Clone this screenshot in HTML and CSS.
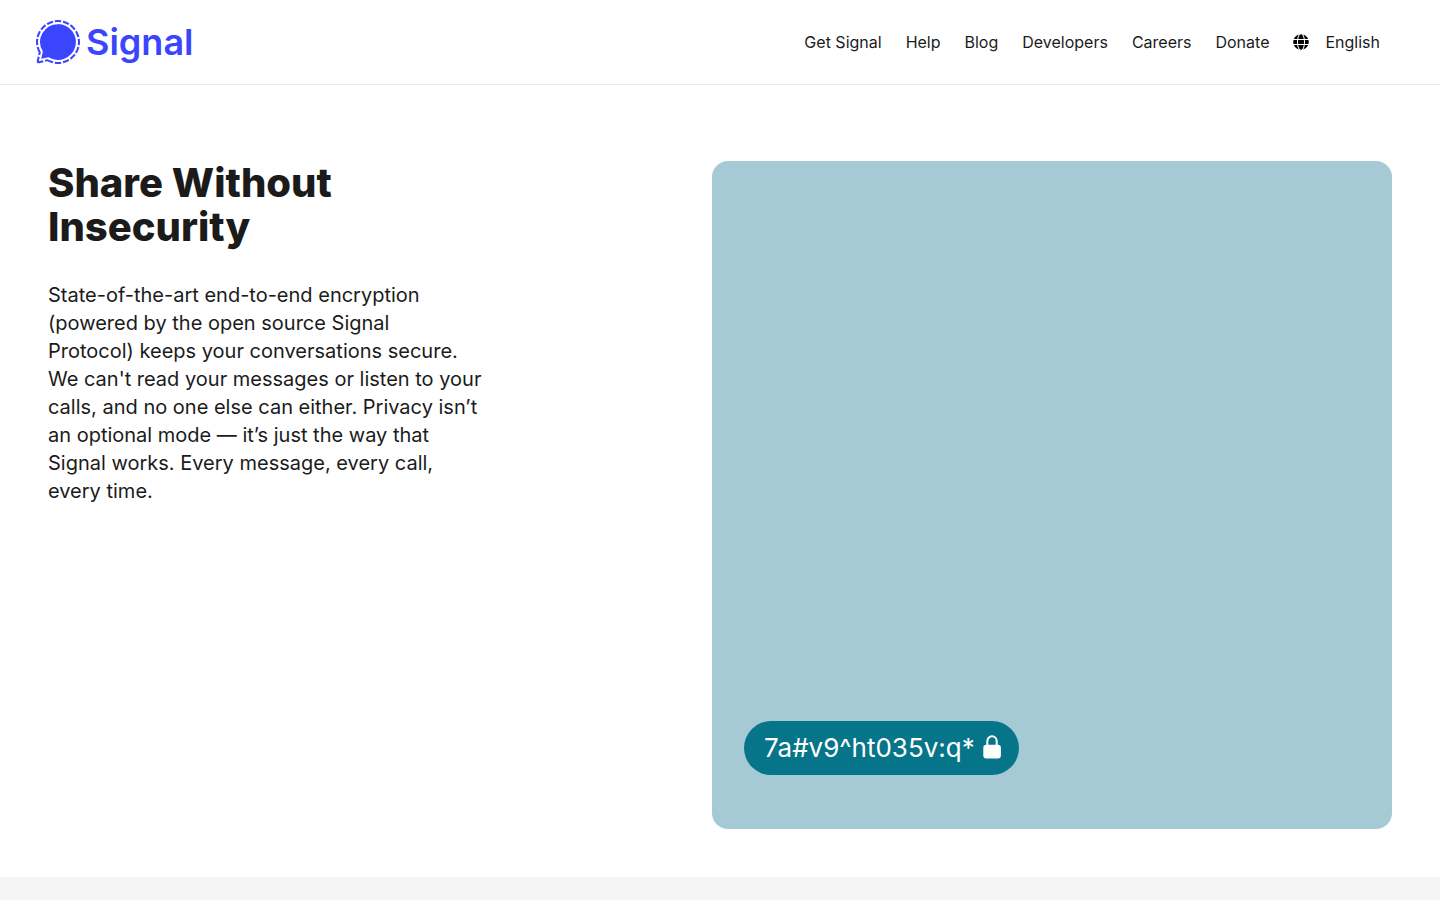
FILE: index.html
```
<!DOCTYPE html>
<html lang="en">
<head>
    <meta charset="utf-8">
    <meta name="viewport" content="width=device-width, initial-scale=1">
    <title>Signal</title>
    <link rel="stylesheet" href="styles.css">
</head>
<body>
    <header class="header">
        <a class="logo" href="#">
            <svg class="logo-mark" viewBox="0 0 24 24" aria-hidden="true">
                <path d="M9.12.35l.27 1.09a10.845 10.845 0 0 0-3.015 1.248l-.578-.963A11.955 11.955 0 0 1 9.12.35zm5.76 0l-.27 1.09a10.845 10.845 0 0 1 3.015 1.248l.581-.963A11.955 11.955 0 0 0 14.88.35zM1.725 5.797A11.955 11.955 0 0 0 .351 9.119l1.09.27A10.845 10.845 0 0 1 2.69 6.374zm-.6 6.202a10.856 10.856 0 0 1 .122-1.63l-1.112-.168a12.043 12.043 0 0 0 0 3.596l1.112-.169A10.856 10.856 0 0 1 1.125 12zm17.078 10.275l-.578-.964a10.845 10.845 0 0 1-3.011 1.247l.27 1.091a11.955 11.955 0 0 0 3.319-1.374zM22.875 12a10.856 10.856 0 0 1-.122 1.63l1.112.168a12.043 12.043 0 0 0 0-3.596l-1.112.169a10.856 10.856 0 0 1 .122 1.63zm.774 2.88l-1.09-.27a10.845 10.845 0 0 1-1.248 3.015l.963.581a11.955 11.955 0 0 0 1.375-3.326zm-10.02 7.875a10.952 10.952 0 0 1-3.258 0l-.17 1.112a12.043 12.043 0 0 0 3.597 0zm7.125-4.303a10.914 10.914 0 0 1-2.304 2.302l.668.906a12.019 12.019 0 0 0 2.542-2.535zM18.45 3.245a10.914 10.914 0 0 1 2.304 2.304l.906-.675a12.019 12.019 0 0 0-2.535-2.535zM3.246 5.549A10.914 10.914 0 0 1 5.55 3.245l-.675-.906A12.019 12.019 0 0 0 2.34 4.874zm19.029.248l-.964.577a10.845 10.845 0 0 1 1.247 3.011l1.091-.27a11.955 11.955 0 0 0-1.374-3.318zM10.371 1.246a10.952 10.952 0 0 1 3.258 0L13.8.134a12.043 12.043 0 0 0-3.597 0zM3.823 21.957L1.5 22.5l.542-2.323-1.095-.257-.542 2.323a1.125 1.125 0 0 0 1.352 1.352l2.321-.532zm-2.642-3.041l1.095.255.375-1.61a10.828 10.828 0 0 1-1.21-2.952l-1.09.27a11.91 11.91 0 0 0 1.106 2.852zm5.25 2.437l-1.61.375.255 1.095 1.185-.275a11.91 11.91 0 0 0 2.851 1.106l.27-1.091a10.828 10.828 0 0 1-2.943-1.217zM12 2.25a9.75 9.75 0 0 0-8.25 14.938l-.938 4 4-.938A9.75 9.75 0 1 0 12 2.25z"/>
            </svg>
            <span class="logo-name">Signal</span>
        </a>
        <nav class="nav">
            <a href="#">Get Signal</a>
            <a href="#">Help</a>
            <a href="#">Blog</a>
            <a href="#">Developers</a>
            <a href="#">Careers</a>
            <a href="#">Donate</a>
            <a class="language" href="#">
                <svg class="globe" viewBox="0 0 496 512" aria-hidden="true">
                    <path d="M336.5 160C322 70.7 287.8 8 248 8s-74 62.7-88.5 152h177zM152 256c0 22.2 1.2 43.5 3.3 64h185.3c2.1-20.5 3.3-41.8 3.3-64s-1.2-43.5-3.3-64H155.3c-2.1 20.5-3.3 41.8-3.3 64zm324.7-96c-28.6-67.9-86.5-120.4-158-141.6 24.4 33.8 41.2 84.7 50 141.6h108zM177.2 18.4C105.8 39.6 47.8 92.1 19.3 160h108c8.7-56.9 25.5-107.8 49.9-141.6zM487.4 192H372.7c2.1 21 3.3 42.5 3.3 64s-1.2 43-3.3 64h114.6c5.5-20.5 8.6-41.8 8.6-64s-3.1-43.5-8.5-64zM120 256c0-21.5 1.2-43 3.3-64H8.6C3.2 212.5 0 233.8 0 256s3.2 43.5 8.6 64h114.6c-2-21-3.2-42.5-3.2-64zm39.5 96c14.5 89.3 48.7 152 88.5 152s74-62.7 88.5-152h-177zm159.3 141.6c71.4-21.2 129.4-73.7 158-141.6h-108c-8.8 56.9-25.6 107.8-50 141.6zM19.3 352c28.6 67.9 86.5 120.4 158 141.6-24.4-33.8-41.2-84.7-50-141.6h-108z"/>
                </svg>
                English
            </a>
        </nav>
    </header>

    <main>
        <section class="feature">
            <div class="feature-text">
                <h1>Share Without Insecurity</h1>
                <p>State-of-the-art end-to-end encryption (powered by the open source Signal<br> Protocol) keeps your conversations secure. We can't read your messages or listen to your calls, and no one else can either. Privacy isn’t an optional mode — it’s just the way that Signal works. Every message, every call, every time.</p>
            </div>
            <div class="feature-panel">
                <div class="message">
                    <span>7a#v9^ht035v:q*</span>
                    <svg class="lock" viewBox="0 0 18 24" aria-hidden="true">
                        <path class="lock-shackle" d="M4.3 10V5.2a4.7 4.9 0 0 1 9.4 0V10"/>
                        <rect x="0.3" y="8.8" width="17.6" height="13.6" rx="3"/>
                    </svg>
                </div>
            </div>
        </section>
        <section class="next-section"></section>
    </main>
</body>
</html>
```
FILE: styles.css
```
:root {
    --signal-blue: #3b45fd;
    --text: #1b1b1b;
    --panel: #a5c9d5;
    --bubble: #067589;
}

* {
    box-sizing: border-box;
}

body {
    margin: 0;
    min-height: 100vh;
    display: flex;
    flex-direction: column;
    font-family: Inter, sans-serif;
    color: var(--text);
    background: #fff;
}

a {
    color: inherit;
    text-decoration: none;
}

main {
    flex: 1;
    display: flex;
    flex-direction: column;
}

/* Header */
.header {
    display: flex;
    align-items: center;
    justify-content: space-between;
    padding: 20px 60px 20px 36px;
    border-bottom: 1px solid #e9e9e9;
}

.logo {
    display: flex;
    align-items: center;
    gap: 6px;
    color: var(--signal-blue);
}

.logo-mark {
    width: 44px;
    height: 44px;
    fill: currentColor;
}

.logo-name {
    font-size: 36px;
    font-weight: 600;
    line-height: 44px;
}

.nav {
    display: flex;
    align-items: center;
    gap: 24px;
    font-size: 16px;
    line-height: 24px;
}

.language {
    display: flex;
    align-items: center;
    gap: 16px;
}

.globe {
    width: 16px;
    height: 16px;
    fill: #000;
}

/* Feature */
.feature {
    display: grid;
    grid-template-columns: 83fr 85fr;
    padding: 76px 48px 48px;
}

.feature-text {
    max-width: 436px;
}

.feature-text h1 {
    max-width: 320px;
    margin: 0 0 32px;
    font-size: 40px;
    font-weight: 800;
    line-height: 44px;
}

.feature-text p {
    margin: 0;
    font-size: 20px;
    line-height: 28px;
}

.feature-panel {
    display: flex;
    align-items: flex-end;
    aspect-ratio: 170 / 167;
    padding: 0 32px 54px;
    background: var(--panel);
    border-radius: 16px;
}

.message {
    display: flex;
    align-items: center;
    gap: 8px;
    padding: 11px 18px 11px 20px;
    font-size: 26px;
    line-height: 32px;
    color: #fff;
    background: var(--bubble);
    border-radius: 27px;
}

.lock {
    width: 18px;
    height: 24px;
    overflow: visible;
    fill: #fff;
}

.lock-shackle {
    fill: none;
    stroke: #fff;
    stroke-width: 2;
}

.next-section {
    flex: 1;
    background: #f5f5f5;
}
```
